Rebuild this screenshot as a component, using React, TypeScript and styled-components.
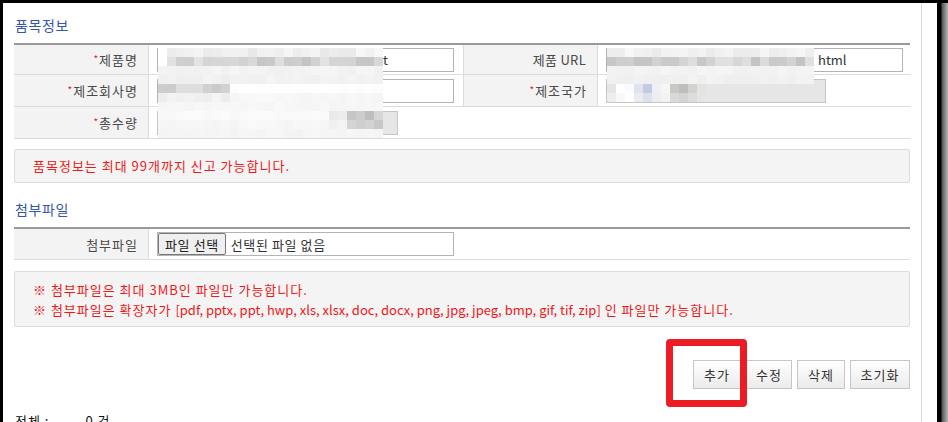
import React from 'react';
import styled, { createGlobalStyle } from 'styled-components';

const GlobalStyle = createGlobalStyle`
  html, body {
    margin: 0;
    padding: 0;
  }
  body {
    font-family: "Noto Sans CJK KR", "Noto Sans", sans-serif;
    font-size: 13px;
    color: #333;
  }
  * {
    box-sizing: border-box;
  }
`;

const Screen = styled.div`
  width: 948px;
  height: 422px;
  overflow: hidden;
  background: #000;
  display: flex;
  padding: 3px 0 0 3px;
`;

const Window = styled.div`
  width: 934px;
  height: 100%;
  background: #fff;
  display: flex;
`;

const Shadow = styled.div`
  flex: 1;
  background: linear-gradient(to right, #000 0, #000 4px, #555 5px, #b8b8b8 100%);
`;

const Page = styled.div`
  width: 919px;
  border-right: 1px solid #dcdcdc;
  padding: 0 11px;
`;

const SectionTitle = styled.h3<{ $top: number }>`
  margin: 0;
  padding: ${(p) => p.$top}px 0 8px 1px;
  font-size: 14px;
  line-height: 20px;
  font-weight: 400;
  letter-spacing: 0.6px;
  color: #3457ad;
`;

const TableWrap = styled.div`
  position: relative;
`;

const FormTable = styled.div<{ $rows: string }>`
  display: grid;
  grid-template-columns: 135px 315px 134px 1fr;
  grid-template-rows: ${(p) => p.$rows};
  border-top: 2px solid #999;
`;

const Label = styled.div<{ $latin?: boolean }>`
  background: #f3f3f3;
  border-bottom: 1px solid #dcdcdc;
  border-right: 1px solid #dcdcdc;
  display: flex;
  align-items: center;
  justify-content: flex-end;
  padding-right: ${(p) => (p.$latin ? 11 : 10)}px;
  color: #4a4a4a;
  letter-spacing: ${(p) => (p.$latin ? 0.3 : 1)}px;
  white-space: nowrap;
`;

const Star = styled.span`
  color: #e0203c;
  font-size: 10px;
  letter-spacing: 0;
  margin-right: 1px;
  position: relative;
  top: -1px;
`;

const Value = styled.div<{ $span?: number; $last?: boolean }>`
  grid-column: span ${(p) => p.$span ?? 1};
  border-bottom: 1px solid #dcdcdc;
  border-right: ${(p) => (p.$last ? 'none' : '1px solid #dcdcdc')};
  display: flex;
  align-items: center;
  padding: 0 8px;
`;

const Field = styled.div<{ $w: number; $disabled?: boolean }>`
  width: ${(p) => p.$w}px;
  height: 24px;
  border: 1px solid ${(p) => (p.$disabled ? '#c6c6c6' : '#b4b4b4')};
  background: ${(p) => (p.$disabled ? '#e6e6e6' : '#fff')};
  display: flex;
  align-items: center;
  padding-left: 3px;
  color: #333;
  line-height: 20px;
  white-space: nowrap;
  overflow: hidden;
`;

const Masked = styled.span<{ $w: number }>`
  display: inline-block;
  width: ${(p) => p.$w}px;
  flex: none;
`;

const FilePick = styled.div`
  width: 297px;
  height: 24px;
  border: 1px solid #b4b4b4;
  display: flex;
  align-items: center;
  gap: 5px;
  color: #333;
  letter-spacing: 0.6px;
`;

const FileButton = styled.span`
  height: 22px;
  padding: 0 6px;
  border: 1px solid #767676;
  border-radius: 2px;
  background: #efefef;
  color: #222;
  display: flex;
  align-items: center;
`;

const Notice = styled.div<{ $mt: number; $pad: string }>`
  margin-top: ${(p) => p.$mt}px;
  background: #f4f4f4;
  border: 1px solid #dcdcdc;
  border-radius: 2px;
  padding: ${(p) => p.$pad};
  color: #f01818;
  line-height: 20px;
  letter-spacing: 1px;
  white-space: nowrap;
`;

const Ext = styled.span`
  letter-spacing: 0;
`;

const ButtonRow = styled.div`
  margin-top: 33px;
  display: flex;
  justify-content: flex-end;
  gap: 5px;
`;

const Button = styled.button<{ $w: number }>`
  width: ${(p) => p.$w}px;
  height: 29px;
  padding: 0;
  font-family: inherit;
  font-size: 13px;
  letter-spacing: 1px;
  color: #333;
  border: 1px solid #c6c6c6;
  background: linear-gradient(#ffffff, #ebebeb);
  border-radius: 0;
`;

const Marked = styled.div`
  position: relative;
  display: flex;
`;

const RedBox = styled.div`
  position: absolute;
  left: -27px;
  top: -21px;
  width: 81px;
  height: 68px;
  border: 7px solid #ed1c24;
  border-radius: 4px;
  pointer-events: none;
`;

const Total = styled.div`
  margin-top: 22px;
  padding-left: 1px;
  line-height: 20px;
  color: #111;
  letter-spacing: 1px;
  display: flex;
`;

const Blank = styled.span<{ $w: number }>`
  display: inline-block;
  width: ${(p) => p.$w}px;
`;

/* privacy mosaic laid over masked values */
const MosaicBox = styled.div<{ $x: number; $y: number }>`
  position: absolute;
  left: ${(p) => p.$x}px;
  top: ${(p) => p.$y}px;
  display: flex;
  flex-direction: column;
  pointer-events: none;
`;

const MosaicRow = styled.div`
  display: flex;
`;

const Pixel = styled.span`
  width: 9px;
  height: 9px;
  flex: none;
`;

const tone = (n: number, base: number, spread: number, seed: number): string[] =>
  Array.from({ length: n }, (_, i) => {
    const h = Math.abs(Math.sin((i + 1) * 12.9898 + seed * 78.233) * 43758.5453) % 1;
    const g = Math.max(0, Math.min(255, Math.round(base - spread / 2 + h * spread)));
    return `rgb(${g},${g},${g})`;
  });

const Mosaic = ({ x, y, rows }: { x: number; y: number; rows: string[][] }) => (
  <MosaicBox $x={x} $y={y}>
    {rows.map((row, r) => (
      <MosaicRow key={r}>
        {row.map((c, i) => (
          <Pixel key={i} style={{ background: c }} />
        ))}
      </MosaicRow>
    ))}
  </MosaicBox>
);

const leftRows: string[][] = [
  ['#fff', ...tone(24, 240, 16, 1)],
  ['#fff', ...tone(24, 212, 34, 2)],
  tone(25, 243, 6, 3),
  tone(25, 241, 6, 4),
  [...tone(8, 214, 26, 5), ...tone(17, 254, 2, 6)],
  [...tone(8, 240, 8, 7), ...tone(17, 247, 4, 8)],
  tone(25, 247, 4, 9),
  [...tone(19, 250, 4, 10), ...tone(2, 238, 8, 11), ...tone(4, 205, 30, 12)],
  [...tone(19, 247, 4, 13), ...tone(2, 240, 8, 14), ...tone(4, 200, 30, 15)],
  tone(25, 245, 4, 16),
];

const rightRows: string[][] = [
  tone(23, 241, 14, 21),
  tone(23, 210, 30, 22),
  tone(23, 243, 5, 23),
  tone(23, 241, 5, 24),
];

const countryRows: string[][] = [
  ['#e8e4e4', '#ffffff', '#fafbfd', '#dfe3ef', '#c3cbe0', '#eef0f5', '#f6f6f6', '#c8c8c4', '#bebebb', '#d2d2cf', '#e3e3e3', '#e6e6e6'],
  ['#eeeeee', '#f8f8f8', '#ffffff', '#e9ecf3', '#dce1ed', '#eeeeee', '#f3f3f3', '#d9d9d6', '#d4d4d2', '#dcdcdc', '#e5e5e5', '#e6e6e6'],
];

const App = () => {
  return (
    <>
      <GlobalStyle />
      <Screen>
        <Window>
          <Page>
            <SectionTitle $top={12}>품목정보</SectionTitle>
            <TableWrap>
              <FormTable $rows="30px 32px 32px">
                <Label>
                  <Star>*</Star>제품명
                </Label>
                <Value>
                  <Field $w={297}>
                    <Masked $w={222} />t
                  </Field>
                </Value>
                <Label $latin>제품 URL</Label>
                <Value $last>
                  <Field $w={297}>
                    <Masked $w={208} />html
                  </Field>
                </Value>

                <Label>
                  <Star>*</Star>제조회사명
                </Label>
                <Value>
                  <Field $w={297} />
                </Value>
                <Label>
                  <Star>*</Star>제조국가
                </Label>
                <Value $last>
                  <Field $w={220} $disabled />
                </Value>

                <Label>
                  <Star>*</Star>총수량
                </Label>
                <Value $span={3} $last>
                  <Field $w={241} $disabled />
                </Value>
              </FormTable>
              <Mosaic x={144} y={5} rows={leftRows} />
              <Mosaic x={593} y={5} rows={rightRows} />
              <Mosaic x={593} y={41} rows={countryRows} />
            </TableWrap>

            <Notice $mt={10} $pad="6px 18px">
              품목정보는 최대 99개까지 신고 가능합니다.
            </Notice>

            <SectionTitle $top={16}>첨부파일</SectionTitle>
            <FormTable $rows="31px">
              <Label>첨부파일</Label>
              <Value $span={3} $last>
                <FilePick>
                  <FileButton>파일 선택</FileButton>
                  선택된 파일 없음
                </FilePick>
              </Value>
            </FormTable>

            <Notice $mt={11} $pad="8px 18px 6px">
              <div>※ 첨부파일은 최대 3MB인 파일만 가능합니다.</div>
              <div>
                ※ 첨부파일은 확장자가{' '}
                <Ext>[pdf, pptx, ppt, hwp, xls, xlsx, doc, docx, png, jpg, jpeg, bmp, gif, tif, zip]</Ext> 인
                파일만 가능합니다.
              </div>
            </Notice>

            <ButtonRow>
              <Marked>
                <Button $w={48}>추가</Button>
                <RedBox />
              </Marked>
              <Button $w={46}>수정</Button>
              <Button $w={48}>삭제</Button>
              <Button $w={60}>초기화</Button>
            </ButtonRow>

            <Total>
              전체 :<Blank $w={36} />0 건
            </Total>
          </Page>
        </Window>
        <Shadow />
      </Screen>
    </>
  );
};

export default App;
